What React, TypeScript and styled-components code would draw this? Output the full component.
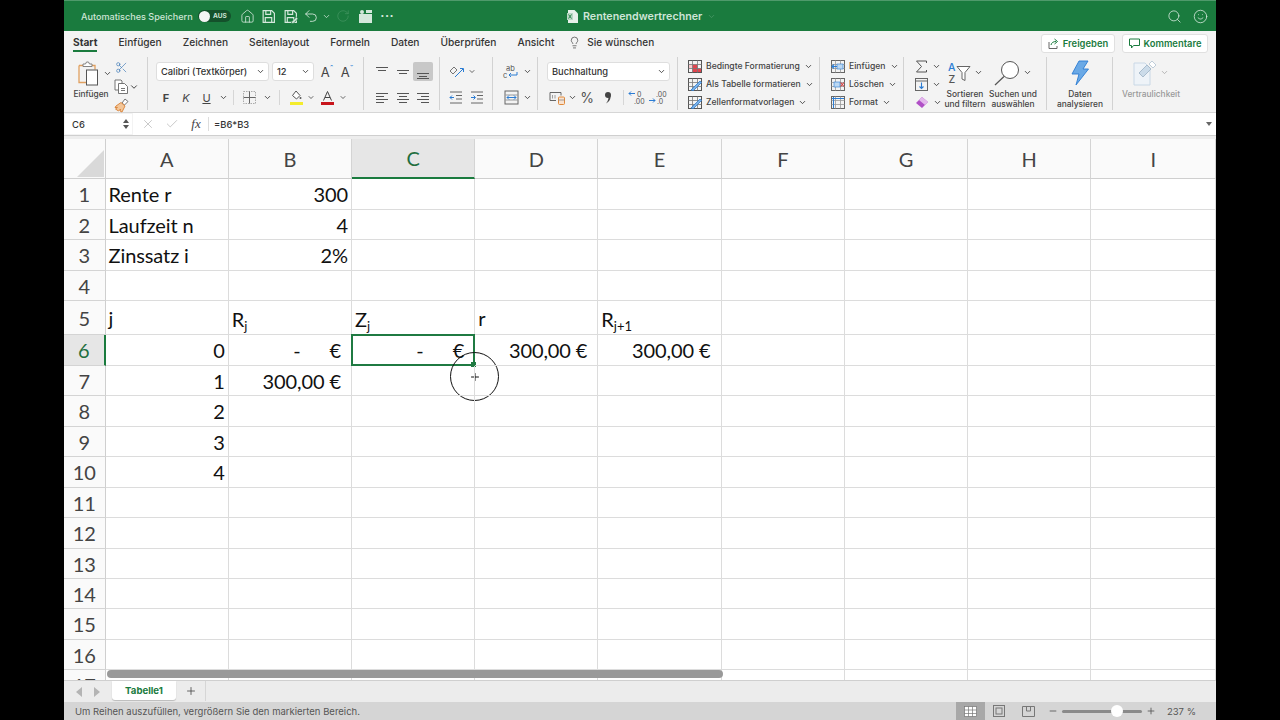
import React from 'react';
import styled, { createGlobalStyle } from 'styled-components';
import { Home, Search, Smile, Lightbulb, Scissors, ChevronDown, Undo2, RotateCw, Check, X, Plus, Minus } from 'lucide-react';

const GlobalStyle = createGlobalStyle`
  html, body { margin: 0; padding: 0; background: #000; height: 100%; overflow: hidden; }
  #root { height: 100%; }
  * { box-sizing: border-box; }
`;

const ui = `Inter, "Liberation Sans", sans-serif`;
const cellFont = `Lato, "Open Sans", sans-serif`;
const green = '#1a7b3e';

const Page = styled.div`
  display: flex;
  justify-content: center;
  height: 720px;
  background: #000;
`;
const Win = styled.div`
  width: 1152px;
  height: 720px;
  display: flex;
  flex-direction: column;
  background: #fff;
  font-family: ${ui};
  overflow: hidden;
`;

/* title bar */
const TitleBar = styled.header`
  height: 31px;
  flex: none;
  display: flex;
  align-items: center;
  position: relative;
  background: ${green};
  border-top: 1px solid #4f9a6b;
  padding-left: 17px;
  color: #fff;
`;
const AutoSave = styled.span`
  font-size: 9.1px;
  font-weight: 500;
  color: #cfe5d7;
  width: 117px;
  white-space: nowrap;
`;
const Toggle = styled.div`
  width: 33px;
  height: 12px;
  border-radius: 6px;
  background: #14512b;
  display: flex;
  align-items: center;
  gap: 3px;
  padding-left: 1px;
  font-size: 6.5px;
  font-weight: 700;
  color: #cfe5d7;
  margin-right: 5px;
`;
const Knob = styled.i`
  width: 11px;
  height: 11px;
  border-radius: 50%;
  background: #f4f4f4;
`;
const QuickSlot = styled.span<{ $w: number }>`
  width: ${p => p.$w}px;
  display: flex;
  justify-content: center;
  align-items: center;
  color: #d5e8dc;
`;
const DocTitle = styled.div`
  position: absolute;
  left: 503px;
  top: 0;
  height: 30px;
  display: flex;
  align-items: center;
  gap: 5px;
  font-size: 10.7px;
  font-weight: 600;
  color: #cfe5d7;
`;
const TitleRight = styled.div`
  margin-left: auto;
  display: flex;
  align-items: center;
  gap: 11px;
  padding-right: 8px;
  color: #d5e8dc;
`;

/* tabs */
const TabBar = styled.nav`
  height: 21px;
  flex: none;
  display: flex;
  align-items: stretch;
  background: #f3f3f3;
  padding-left: 9px;
  position: relative;
`;
const Tab = styled.span<{ $active?: boolean }>`
  font-size: 10.2px;
  font-weight: ${p => (p.$active ? 700 : 500)};
  color: #333;
  margin-right: 21px;
  padding-top: 2px;
  display: flex;
  align-items: center;
  white-space: nowrap;
  border-bottom: 2px solid ${p => (p.$active ? green : 'transparent')};
`;
const TellMe = styled.span`
  display: flex;
  align-items: center;
  gap: 6px;
  font-size: 10px;
  font-weight: 500;
  color: #333;
  margin-left: -7px;
  padding-top: 1px;
`;
const ShareButtons = styled.div`
  position: absolute;
  top: 3px;
  right: 8px;
  display: flex;
  gap: 7px;
`;
const ShareButton = styled.span<{ $w: number }>`
  width: ${p => p.$w}px;
  height: 19px;
  background: #fff;
  border: 1px solid #e0e0e0;
  border-radius: 3px;
  display: flex;
  align-items: center;
  justify-content: center;
  gap: 4px;
  font-size: 9.4px;
  font-weight: 600;
  color: ${green};
`;

/* ribbon */
const Ribbon = styled.section`
  height: 61px;
  flex: none;
  display: flex;
  background: #f3f3f3;
  border-bottom: 1px solid #d6d6d6;
`;
const Group = styled.div<{ $w: number; $pad?: number; $sep?: boolean }>`
  width: ${p => p.$w}px;
  flex: none;
  padding-left: ${p => p.$pad ?? 0}px;
  height: 53px;
  margin-top: 5px;
  display: flex;
  border-right: ${p => (p.$sep === false ? 'none' : '1px solid #d2d2d2')};
`;
const TwoRows = styled.div`
  display: flex;
  flex-direction: column;
  gap: 7px;
  padding-top: 5px;
`;
const Row = styled.div`
  display: flex;
  align-items: center;
  height: 19px;
`;
const Slot = styled.span<{ $w: number; $on?: boolean }>`
  width: ${p => p.$w}px;
  height: 19px;
  flex: none;
  display: flex;
  align-items: center;
  justify-content: center;
  border-radius: 2px;
  background: ${p => (p.$on ? '#c8c8c8' : 'transparent')};
  color: #444;
  font-size: 11px;
`;
const BigGlyph = styled.span`
  font-size: 14px;
  color: #555;
`;
const SizeGlyph = styled.span`
  font-size: 13px;
  color: #444;
  sup {
    font-size: 9px;
    line-height: 0;
    color: #2b7cd3;
  }
`;
const Combo = styled.div<{ $w: number }>`
  width: ${p => p.$w}px;
  height: 19px;
  flex: none;
  background: #fff;
  border: 1px solid #dedede;
  border-radius: 3px;
  display: flex;
  align-items: center;
  justify-content: space-between;
  padding: 0 3px 0 4px;
  font-size: 9.3px;
  font-weight: 500;
  color: #333;
  margin-right: 3px;
  white-space: nowrap;
`;
const VSep = styled.i`
  width: 1px;
  height: 15px;
  background: #d6d6d6;
  flex: none;
`;
const PasteCol = styled.div`
  width: 46px;
  margin-left: 4px;
  display: flex;
  flex-direction: column;
  align-items: center;
  font-size: 8.3px;
  font-weight: 500;
  color: #444;
`;
const PasteIcon = styled.div`
  height: 31px;
  display: flex;
  align-items: center;
  gap: 1px;
  margin-left: 8px;
  margin-top: 1px;
`;
const SmallCol = styled.div`
  display: flex;
  flex-direction: column;
  justify-content: space-between;
  padding: 1px 0 0;
  height: 53px;
`;
const ListCol = styled.div`
  display: flex;
  flex-direction: column;
  padding-top: 0;
`;
const ListItem = styled.div`
  height: 18px;
  flex: none;
  display: flex;
  align-items: center;
  gap: 4px;
  font-size: 8.6px;
  font-weight: 500;
  color: #444;
  white-space: nowrap;
`;
const BigTool = styled.div<{ $w: number; $muted?: boolean }>`
  width: ${p => p.$w}px;
  flex: none;
  display: flex;
  flex-direction: column;
  align-items: center;
  text-align: center;
  font-size: 8.4px;
  line-height: 9.6px;
  font-weight: 500;
  color: ${p => (p.$muted ? '#999' : '#444')};
  white-space: nowrap;
`;
const BigIcon = styled.div`
  height: 29px;
  margin-top: 1px;
  margin-bottom: 3px;
  display: flex;
  align-items: center;
  gap: 3px;
`;

/* formula bar */
const FormulaBar = styled.div`
  height: 22px;
  flex: none;
  display: flex;
  align-items: stretch;
  background: #f3f3f3;
`;
const NameBox = styled.div`
  width: 67px;
  margin: 1px 0 1px 1px;
  background: #fff;
  display: flex;
  align-items: center;
  justify-content: space-between;
  padding: 0 3px 0 7px;
  font-size: 9.4px;
  font-weight: 500;
  color: #333;
`;
const Spinner = styled.div`
  display: flex;
  flex-direction: column;
  gap: 2px;
`;
const FormulaInput = styled.div`
  flex: 1;
  margin-left: 1px;
  background: #fff;
  display: flex;
  align-items: center;
  position: relative;
  padding-left: 3px;
  font-size: 9.4px;
  color: #333;
`;
const FxSlot = styled.span<{ $w: number }>`
  width: ${p => p.$w}px;
  display: flex;
  justify-content: center;
  color: #bdbdbd;
`;
const Fx = styled.span`
  width: 24px;
  font: italic 13px "Liberation Serif", serif;
  color: #444;
  text-align: center;
`;
const FormulaText = styled.span`
  border-left: 1px solid #ddd;
  padding-left: 5px;
  margin-left: 0;
  height: 14px;
  display: flex;
  align-items: center;
  font-weight: 500;
`;
const FormulaCaret = styled.i`
  position: absolute;
  right: 4px;
  top: 9px;
  border: 3px solid transparent;
  border-top: 4px solid #666;
`;

/* sheet */
const SheetGap = styled.div`
  height: 4px;
  flex: none;
  background: #ededed;
  border-top: 1px solid #cfcfcf;
`;
const Sheet = styled.div`
  height: 541px;
  flex: none;
  position: relative;
  overflow: hidden;
  display: grid;
  grid-template-columns: 41.6px repeat(8, 123.2px) 1fr;
  grid-template-rows: 40px 31px 30px 31px 30px 34px 31px 30px 31px 30px 31px 30px 31px 30px 30px 31px 30px 31px;
  background: #fff;
`;
const Corner = styled.div`
  background: #fafafa;
  border-right: 1px solid #cfcfcf;
  border-bottom: 1px solid #cfcfcf;
  position: relative;
  &::after {
    content: '';
    position: absolute;
    right: 1px;
    bottom: 1px;
    border-style: solid;
    border-width: 0 0 27px 27px;
    border-color: transparent transparent #d9d9d9 transparent;
  }
`;
const ColHead = styled.div<{ $on?: boolean }>`
  background: ${p => (p.$on ? '#e6e6e6' : '#fafafa')};
  border-right: 1px solid #d4d4d4;
  border-bottom: ${p => (p.$on ? `2px solid ${green}` : '1px solid #cfcfcf')};
  display: flex;
  align-items: center;
  justify-content: center;
  font: 20px ${cellFont};
  letter-spacing: -0.4px;
  color: ${p => (p.$on ? '#1f6f3f' : '#444')};
`;
const RowHead = styled.div<{ $on?: boolean }>`
  background: ${p => (p.$on ? '#e6e6e6' : '#fafafa')};
  border-right: ${p => (p.$on ? `2px solid ${green}` : '1px solid #cfcfcf')};
  border-bottom: 1px solid #d4d4d4;
  display: flex;
  align-items: center;
  justify-content: center;
  font: 20px ${cellFont};
  letter-spacing: 0;
  color: ${p => (p.$on ? '#1f6f3f' : '#444')};
`;
const Cell = styled.div<{ $right?: number }>`
  position: relative;
  border-right: 1px solid #dcdcdc;
  border-bottom: 1px solid #dcdcdc;
  display: flex;
  align-items: center;
  justify-content: ${p => (p.$right != null ? 'flex-end' : 'flex-start')};
  padding: ${p => (p.$right != null ? `0 ${p.$right}px 0 0` : '0 0 0 3px')};
  font: 20px ${cellFont};
  letter-spacing: -0.1px;
  color: #111;
  white-space: nowrap;
`;
const SubCell = styled.span`
  margin-top: 3px;
  sub {
    font-size: 13px;
    line-height: 0;
    vertical-align: -4px;
    letter-spacing: 0;
  }
`;
const Dash = styled.span`
  margin-right: 29px;
`;
const Selection = styled.div`
  position: absolute;
  inset: -1px -1px -1px -1px;
  border: 2px solid #1f7a42;
  pointer-events: none;
`;
const Handle = styled.i`
  position: absolute;
  right: -3px;
  bottom: -3px;
  width: 5px;
  height: 5px;
  background: #1f7a42;
`;
const CursorRing = styled.div`
  position: absolute;
  right: -26px;
  bottom: -37px;
  width: 49px;
  height: 49px;
  border-radius: 50%;
  border: 1.3px solid #111;
  display: flex;
  align-items: center;
  justify-content: center;
  color: #111;
`;
const ScrollThumb = styled.div`
  position: absolute;
  left: 43px;
  bottom: 2px;
  width: 616px;
  height: 8px;
  border-radius: 4px;
  background: #999;
`;

/* bottom */
const SheetTabs = styled.div`
  height: 22px;
  flex: none;
  display: flex;
  align-items: flex-start;
  background: #ececec;
  border-top: 1px solid #cfcfcf;
  padding-left: 12px;
`;
const NavArrow = styled.i<{ $dir: 'l' | 'r' }>`
  margin-top: 6px;
  margin-right: 12px;
  border: 5px solid transparent;
  border-left: ${p => (p.$dir === 'r' ? '6px solid #b4b4b4' : 'none')};
  border-right: ${p => (p.$dir === 'l' ? '6px solid #b4b4b4' : 'none')};
`;
const SheetTab = styled.div`
  width: 64px;
  height: 19px;
  background: #fff;
  border-radius: 0 0 3px 3px;
  box-shadow: 0 1px 1px #bbb;
  display: flex;
  align-items: center;
  justify-content: center;
  font-size: 9.6px;
  font-weight: 700;
  color: ${green};
`;
const AddSheet = styled.div`
  width: 30px;
  height: 20px;
  border-right: 1px solid #d6d6d6;
  display: flex;
  align-items: center;
  justify-content: center;
  color: #444;
`;
const StatusBar = styled.footer`
  height: 18px;
  flex: none;
  display: flex;
  align-items: center;
  background: #d5d5d5;
  padding-left: 11px;
  font-size: 9.5px;
  color: #555;
`;
const StatusRight = styled.div`
  margin-left: auto;
  display: flex;
  align-items: center;
  height: 100%;
`;
const ViewButtons = styled.div`
  display: flex;
  height: 100%;
  margin-right: 5px;
`;
const ViewBtn = styled.span<{ $on?: boolean }>`
  width: 29px;
  height: 100%;
  display: flex;
  align-items: center;
  justify-content: center;
  background: ${p => (p.$on ? '#a8a8a8' : 'transparent')};
  color: #666;
`;
const ZoomTrack = styled.div`
  width: 80px;
  height: 3px;
  margin: 0 4px;
  background: #8a8a8a;
  border-radius: 2px;
  position: relative;
`;
const ZoomKnob = styled.i`
  position: absolute;
  left: 49px;
  top: -5px;
  width: 12px;
  height: 12px;
  border-radius: 50%;
  background: #fff;
`;
const ZoomValue = styled.span`
  margin: 0 20px 0 11px;
  white-space: nowrap;
`;

/* drawn icons */
const Chev = ({ size = 10, color = '#333' }: { size?: number; color?: string }) => (
  <ChevronDown size={size} color={color} strokeWidth={2.2} />
);

const Lines = ({ kind }: { kind: 'top' | 'mid' | 'bottom' | 'left' | 'center' | 'right' }) => {
  const rows: Record<string, [number, number, number][]> = {
    top: [[1, 2, 13], [3, 5, 11]],
    mid: [[1, 5, 13], [3, 8, 11]],
    bottom: [[1, 8, 13], [3, 11, 11]],
    left: [[1, 2, 13], [1, 5, 9], [1, 8, 13], [1, 11, 9]],
    center: [[1, 2, 13], [3, 5, 11], [1, 8, 13], [3, 11, 11]],
    right: [[1, 2, 13], [5, 5, 13], [1, 8, 13], [5, 11, 13]],
  };
  return (
    <svg width="14" height="14" viewBox="0 0 14 14" stroke="#555" strokeWidth="1">
      {rows[kind].map(([x, y, e]) => (
        <line key={`${x}-${y}`} x1={x} y1={y + 0.5} x2={e} y2={y + 0.5} />
      ))}
      {kind === 'bottom' && <line x1="1" y1="13.5" x2="13" y2="13.5" />}
    </svg>
  );
};

const SaveIcon = ({ pen }: { pen?: boolean }) => (
  <svg width="15" height="15" viewBox="0 0 14 14" fill="none" stroke="#d5e8dc" strokeWidth="1.1">
    <path d="M2 1.5h8l2.5 2.5v8.5H2z" />
    <path d="M4.5 1.5v3.5h4.500V1.500M4 12.500V8h6v4.500" />
    {pen && <path d="M8 12l4.500-4.500 1.500 1.500L9.500 13.500H8z" fill="#d5e8dc" stroke={green} strokeWidth="0.6" />}
  </svg>
);

const ClipIcon = () => (
  <svg width="24" height="25" viewBox="0 0 24 25" fill="none">
    <path d="M1 4.500h4M14 4.500h3v4" stroke="#e0a060" strokeWidth="1.300" />
    <path d="M1 4.500v17h7" stroke="#e0a060" strokeWidth="1.300" />
    <path d="M5 5V3h2.500l1-2h2l1 2H14v2.500H5z" fill="#fff" stroke="#777" strokeWidth="0.9" />
    <rect x="8.500" y="9" width="11" height="15" fill="#fff" stroke="#555" strokeWidth="1" />
  </svg>
);

const CopyIcon = () => (
  <svg width="15" height="15" viewBox="0 0 15 15" fill="#fff" stroke="#666" strokeWidth="0.9">
    <path d="M1 1h6l1 1v9H1z" />
    <path d="M4.500 4.500h6l3 3v7h-9z" />
    <path d="M7 9.500h4M7 11.500h4" />
  </svg>
);

const BrushIcon = () => (
  <svg width="15" height="15" viewBox="0 0 15 15" fill="none">
    <path d="M8 5l3-4 3 2.500-3.500 3.500z" fill="#fff" stroke="#666" strokeWidth="0.9" />
    <path d="M2 8l5-3.500 4 3.500-3 6-2-1 .5-2-2 2-3-2 2-1.500H1z" fill="#f3c699" stroke="#d98136" strokeWidth="0.9" />
  </svg>
);

const BorderIcon = () => (
  <svg width="15" height="15" viewBox="0 0 15 15" fill="none" stroke="#aaa" strokeWidth="1" strokeDasharray="1.500 1">
    <rect x="1.500" y="1.500" width="12" height="12" />
    <path d="M7.500 1.500v12M1.500 7.500h12" stroke="#666" strokeDasharray="none" />
  </svg>
);

const FillIcon = () => (
  <svg width="15" height="16" viewBox="0 0 15 16">
    <path d="M7 1l4 4.500L7.500 9 3.500 5.500z" fill="#fff" stroke="#555" strokeWidth="1" />
    <circle cx="11.500" cy="8" r="1" fill="#555" />
    <rect x="1" y="12" width="13" height="3" fill="#f4ec2c" />
  </svg>
);

const FontColorIcon = () => (
  <svg width="15" height="16" viewBox="0 0 15 16">
    <path d="M3.500 10.500l4-9 4 9M5 7.500h5" fill="none" stroke="#444" strokeWidth="1" />
    <rect x="1" y="12" width="13" height="3" fill="#c8151c" />
  </svg>
);

const OrientIcon = () => (
  <svg width="16" height="14" viewBox="0 0 16 14" fill="none">
    <path d="M1 6l4-4 3 3-4 4z" stroke="#666" strokeWidth="0.9" />
    <path d="M6 12l8-8M11 3.500h3.500V7" stroke="#2b7cd3" strokeWidth="1" />
  </svg>
);

const IndentIcon = ({ flip }: { flip?: boolean }) => (
  <svg width="14" height="13" viewBox="0 0 14 13" fill="none">
    <path d="M1 1h12M1 12h12" stroke="#666" />
    <path d="M7 4.500h6M7 8h6" stroke="#666" />
    {flip ? <path d="M1 6.500h4M3.500 4.500l2 2-2 2" stroke="#2b7cd3" /> : <path d="M1 6.500h4M3 4.500l-2 2 2 2" stroke="#2b7cd3" />}
  </svg>
);

const WrapIcon = () => (
  <svg width="18" height="16" viewBox="0 0 18 16" fill="none">
    <text x="4" y="6.500" fontSize="7.500" fill="#555" fontFamily="Inter, sans-serif">ab</text>
    <text x="1" y="13.500" fontSize="7.500" fill="#555" fontFamily="Inter, sans-serif">c</text>
    <path d="M15 8v3H7M9 9l-2 2 2 2" stroke="#2b7cd3" />
  </svg>
);

const MergeIcon = () => (
  <svg width="15" height="15" viewBox="0 0 15 15" fill="none">
    <rect x="1" y="1" width="13" height="13" stroke="#666" />
    <path d="M1 5h13M1 10h13" stroke="#999" />
    <path d="M3 7.500h9M5 5.500l-2 2 2 2M10 5.500l2 2-2 2" stroke="#2b7cd3" />
  </svg>
);

const AccountIcon = () => (
  <svg width="16" height="14" viewBox="0 0 16 14" fill="none">
    <path d="M1 1.500h11v3M1 1.500v8h6" stroke="#666" />
    <rect x="9.500" y="6" width="6" height="7.500" rx="1" fill="#f8e2cf" stroke="#e08a3c" />
    <path d="M9.500 9h6M3.500 4v3.500M6 4v3.500" stroke="#888" strokeWidth="0.8" />
  </svg>
);

const CommaIcon = () => (
  <svg width="8" height="13" viewBox="0 0 8 13">
    <circle cx="4" cy="4" r="3" fill="#444" />
    <path d="M6.500 4.500C7 8 5 11 2 12.500 4 10 4.500 8 4.500 6z" fill="#444" />
  </svg>
);

const DecimalIcon = ({ more }: { more?: boolean }) => (
  <svg width="20" height="15" viewBox="0 0 20 15" fill="none">
    <path d={more ? 'M1 10.500h6M5 8.500l2 2-2 2' : 'M1 3.500h6M3 1.500l-2 2 2 2'} stroke="#2b7cd3" />
    <text x={more ? 8 : 9} y="6.500" fontSize="7" fill="#555" fontFamily="Inter, sans-serif">{more ? '.00' : '0'}</text>
    <text x={more ? 9 : 6} y="13.500" fontSize="7" fill="#555" fontFamily="Inter, sans-serif">{more ? '.0' : '.00'}</text>
  </svg>
);

const StyleIcon = ({ kind }: { kind: 'cond' | 'table' | 'cell' }) => (
  <svg width="14" height="13" viewBox="0 0 14 13" fill="none">
    {kind === 'cond' && <path d="M4.500 4.500h5v8h-5zM9.500 8.500H13v4H9.500z" fill="#e0444e" />}
    {kind === 'cond' && <path d="M.5 4.500h3.500v4H.5z" fill="#f6c9cb" />}
    <rect x="0.500" y="0.500" width="13" height="12" stroke="#555" />
    <path d="M.5 4.500h13M.5 8.500h13M4.500.5v12M9.500.5v12" stroke="#777" strokeWidth="0.8" />
    {kind !== 'cond' && <path d="M3 12L12 3l1.500 1.500-8 8z" fill="#7fb3e6" stroke="#2b7cd3" strokeWidth="0.8" />}
  </svg>
);

const CellsIcon = ({ kind }: { kind: 'ins' | 'del' | 'fmt' }) => (
  <svg width="14" height="13" viewBox="0 0 14 13" fill="none">
    <rect x="0.500" y="0.500" width="13" height="12" stroke="#666" />
    <path d="M.5 4.500h13M.5 8.500h13M4.500.5v12M9.500.5v12" stroke="#999" strokeWidth="0.8" />
    {kind === 'ins' && <path d="M6 6.500H1M3 4.500l-2 2 2 2" stroke="#2b7cd3" strokeWidth="1.100" />}
    {kind === 'ins' && <rect x="6" y="4" width="6" height="5" fill="#bcd8f2" stroke="#2b7cd3" strokeWidth="0.6" />}
    {kind === 'del' && <rect x="3" y="4" width="6" height="5" fill="#bcd8f2" stroke="#2b7cd3" strokeWidth="0.6" />}
    {kind === 'del' && <path d="M9.500 4.500l3.500 4M13 4.500l-3.500 4" stroke="#d23b3b" strokeWidth="1.100" />}
    {kind === 'fmt' && <path d="M1 2.500h12M2.500 1v11" stroke="#2b7cd3" />}
  </svg>
);

const SigmaIcon = () => (
  <svg width="13" height="13" viewBox="0 0 13 13" fill="none" stroke="#555" strokeWidth="1">
    <path d="M11.500 3V1H1.500l5 5.500-5 5.500h10v-2" />
  </svg>
);
const FillDownIcon = () => (
  <svg width="13" height="13" viewBox="0 0 13 13" fill="none">
    <rect x="0.500" y="0.500" width="12" height="12" stroke="#666" />
    <path d="M.5 3h12" stroke="#666" />
    <path d="M6.500 4.500v6M4.500 8.500l2 2 2-2" stroke="#2b7cd3" strokeWidth="1.100" />
  </svg>
);
const EraserIcon = () => (
  <svg width="14" height="13" viewBox="0 0 14 13">
    <path d="M1 7l6-6 6 5-6 6z" fill="#b04fc6" />
    <path d="M7 1l6 5-3 3-6-5z" fill="#e3b7ec" />
  </svg>
);
const SortFilterIcon = () => (
  <svg width="24" height="26" viewBox="0 0 24 26" fill="none">
    <text x="1" y="11" fontSize="10.500" fill="#2b7cd3" fontFamily="Inter, sans-serif">A</text>
    <text x="1.500" y="23" fontSize="10.500" fill="#555" fontFamily="Inter, sans-serif">Z</text>
    <path d="M10 6.500h13l-5 6v8l-3-1.500v-6.500z" stroke="#666" fill="#fff" />
  </svg>
);
const LensIcon = () => (
  <svg width="26" height="26" viewBox="0 0 26 26" fill="none" stroke="#555">
    <circle cx="16" cy="10" r="8.500" fill="#fff" />
    <path d="M10 16.500L1 25" strokeWidth="1.200" />
  </svg>
);
const BoltIcon = () => (
  <svg width="18" height="26" viewBox="0 0 18 26">
    <path d="M8 1h9l-5 8h5.500L5 25l3-11H1z" fill="#6aa9e6" stroke="#2b7cd3" strokeWidth="0.9" />
  </svg>
);
const SensIcon = () => (
  <svg width="24" height="26" viewBox="0 0 24 26" fill="none">
    <path d="M1 3h11l5 5v17H1z" fill="#eef3f8" stroke="#c9d8e6" />
    <path d="M6 13l8-8 4 4-8 8z" fill="#cbdbe9" stroke="#a9bccd" />
    <path d="M16 4l3-3 4 4-3 3z" fill="#fff" stroke="#bfcdd9" />
  </svg>
);
const ExcelDoc = () => (
  <svg width="11" height="13" viewBox="0 0 11 13">
    <path d="M1 0h6.500L11 3.500V13H1z" fill="#e7f1ea" />
    <rect x="0" y="3" width="6" height="7" fill="#b9d7c4" />
    <path d="M1.500 4.500l3 4M4.500 4.500l-3 4" stroke="#1a7b3e" strokeWidth="0.9" />
  </svg>
);
const ShareIcon = () => (
  <svg width="11" height="11" viewBox="0 0 11 11" fill="none" stroke="#666">
    <path d="M1 4v6.500h8V8" />
    <path d="M3 7c.5-2.500 2.500-3.500 5-3.500M6.500 1l3 2.500-3 2.500" stroke="#1a7b3e" />
  </svg>
);
const CommentIcon = () => (
  <svg width="11" height="11" viewBox="0 0 11 11" fill="none" stroke="#1a7b3e">
    <path d="M.5 1h10v6.500H4.500l-2 2.500V7.500h-2z" />
  </svg>
);
const ClipboardGreen = () => (
  <svg width="15" height="14" viewBox="0 0 15 14" fill="#d5e8dc">
    <rect x="1" y="5" width="13" height="9" />
    <circle cx="4" cy="3" r="2" />
    <rect x="8" y="1" width="6" height="3" />
  </svg>
);
const GridView = () => (
  <svg width="13" height="11" viewBox="0 0 13 11" fill="#fff" stroke="#777" strokeWidth="0.7">
    <rect x=".5" y=".5" width="12" height="10" />
    <path d="M.5 4h12M.5 7.500h12M4.500.5v10M8.500.5v10" />
  </svg>
);
const PageView = () => (
  <svg width="12" height="12" viewBox="0 0 12 12" fill="none" stroke="#777">
    <rect x=".5" y=".5" width="11" height="11" />
    <rect x="3" y="3" width="6" height="6" />
  </svg>
);
const BreakView = () => (
  <svg width="13" height="11" viewBox="0 0 13 11" fill="none" stroke="#777">
    <path d="M.5 10.500V.5h12v10zM4.500.5v4.500h4V.5" />
  </svg>
);

/* sheet data */
type Value = { v: React.ReactNode; right?: number };
const ACC = 10;
const DASH: React.ReactNode = (
  <>
    <Dash>-</Dash>€
  </>
);
const rows: Record<number, Record<string, Value>> = {
  1: { A: { v: 'Rente r' }, B: { v: '300', right: 3 } },
  2: { A: { v: 'Laufzeit n' }, B: { v: '4', right: 3 } },
  3: { A: { v: 'Zinssatz i' }, B: { v: '2%', right: 3 } },
  5: {
    A: { v: 'j' },
    B: { v: <SubCell>R<sub>j</sub></SubCell> },
    C: { v: <SubCell>Z<sub>j</sub></SubCell> },
    D: { v: 'r' },
    E: { v: <SubCell>R<sub>j+1</sub></SubCell> },
  },
  6: {
    A: { v: '0', right: 3 },
    B: { v: DASH, right: ACC },
    C: { v: DASH, right: ACC },
    D: { v: '300,00 €', right: ACC },
    E: { v: '300,00 €', right: ACC },
  },
  7: { A: { v: '1', right: 3 }, B: { v: '300,00 €', right: ACC } },
  8: { A: { v: '2', right: 3 } },
  9: { A: { v: '3', right: 3 } },
  10: { A: { v: '4', right: 3 } },
};
const cols = ['A', 'B', 'C', 'D', 'E', 'F', 'G', 'H', 'I'];
const rowNums = Array.from({ length: 17 }, (_, i) => i + 1);
const tabs = ['Einfügen', 'Zeichnen', 'Seitenlayout', 'Formeln', 'Daten', 'Überprüfen', 'Ansicht'];

export default function App() {
  return (
    <Page>
      <GlobalStyle />
      <Win>
        <TitleBar>
          <AutoSave>Automatisches Speichern</AutoSave>
          <Toggle><Knob />AUS</Toggle>
          <QuickSlot $w={22}><Home size={15} strokeWidth={1.3} /></QuickSlot>
          <QuickSlot $w={21}><SaveIcon /></QuickSlot>
          <QuickSlot $w={22}><SaveIcon pen /></QuickSlot>
          <QuickSlot $w={20}><Undo2 size={16} strokeWidth={1.3} /></QuickSlot>
          <QuickSlot $w={10}><ChevronDown size={9} strokeWidth={2} /></QuickSlot>
          <QuickSlot $w={24}><RotateCw size={14} strokeWidth={1} color="#4c9a69" /></QuickSlot>
          <QuickSlot $w={20}><ClipboardGreen /></QuickSlot>
          <QuickSlot $w={24}>···</QuickSlot>
          <DocTitle>
            <ExcelDoc />
            Rentenendwertrechner
            <ChevronDown size={9} color="#4c9a69" />
          </DocTitle>
          <TitleRight>
            <Search size={15} strokeWidth={1.3} />
            <Smile size={15} strokeWidth={1.3} />
          </TitleRight>
        </TitleBar>

        <TabBar>
          <Tab $active>Start</Tab>
          {tabs.map(t => <Tab key={t}>{t}</Tab>)}
          <TellMe>
            <Lightbulb size={13} strokeWidth={1.2} />
            Sie wünschen
          </TellMe>
          <ShareButtons>
            <ShareButton $w={74}><ShareIcon />Freigeben</ShareButton>
            <ShareButton $w={86}><CommentIcon />Kommentare</ShareButton>
          </ShareButtons>
        </TabBar>

        <Ribbon>
          <Group $w={84} $pad={0}>
            <PasteCol>
              <PasteIcon><ClipIcon /><Chev size={9} /></PasteIcon>
              <span>Einfügen</span>
            </PasteCol>
            <SmallCol>
              <Slot $w={15}><Scissors size={13} strokeWidth={1.1} color="#2b6cb0" /></Slot>
              <Row><Slot $w={15}><CopyIcon /></Slot><Chev size={10} /></Row>
              <Slot $w={15}><BrushIcon /></Slot>
            </SmallCol>
          </Group>

          <Group $w={216} $pad={8}>
            <TwoRows>
              <Row>
                <Combo $w={113}>Calibri (Textkörper)<Chev size={9} /></Combo>
                <Combo $w={42}>12<Chev size={9} /></Combo>
                <Slot $w={20}><SizeGlyph>A<sup>ˆ</sup></SizeGlyph></Slot>
                <Slot $w={20}><SizeGlyph>A<sup>ˇ</sup></SizeGlyph></Slot>
              </Row>
              <Row>
                <Slot $w={20}><b>F</b></Slot>
                <Slot $w={20}><i>K</i></Slot>
                <Slot $w={21}><u>U</u></Slot>
                <Slot $w={12}><Chev size={9} /></Slot>
                <Slot $w={8}><VSep /></Slot>
                <Slot $w={24}><BorderIcon /></Slot>
                <Slot $w={12}><Chev size={9} /></Slot>
                <Slot $w={12}><VSep /></Slot>
                <Slot $w={22}><FillIcon /></Slot>
                <Slot $w={8}><Chev size={9} /></Slot>
                <Slot $w={24}><FontColorIcon /></Slot>
                <Slot $w={8}><Chev size={9} /></Slot>
              </Row>
            </TwoRows>
          </Group>

          <Group $w={76} $pad={8}>
            <TwoRows>
              <Row>
                <Slot $w={20}><Lines kind="top" /></Slot>
                <Slot $w={21}><Lines kind="mid" /></Slot>
                <Slot $w={20} $on><Lines kind="bottom" /></Slot>
              </Row>
              <Row>
                <Slot $w={20}><Lines kind="left" /></Slot>
                <Slot $w={21}><Lines kind="center" /></Slot>
                <Slot $w={20}><Lines kind="right" /></Slot>
              </Row>
            </TwoRows>
          </Group>

          <Group $w={53} $pad={6}>
            <TwoRows>
              <Row>
                <Slot $w={22}><OrientIcon /></Slot>
                <Slot $w={8}><Chev size={9} /></Slot>
              </Row>
              <Row>
                <Slot $w={20}><IndentIcon /></Slot>
                <Slot $w={21}><IndentIcon flip /></Slot>
              </Row>
            </TwoRows>
          </Group>

          <Group $w={45} $pad={8}>
            <TwoRows>
              <Row><Slot $w={20}><WrapIcon /></Slot><Slot $w={12}><Chev size={9} /></Slot></Row>
              <Row><Slot $w={20}><MergeIcon /></Slot><Slot $w={12}><Chev size={9} /></Slot></Row>
            </TwoRows>
          </Group>

          <Group $w={140} $pad={9}>
            <TwoRows>
              <Row><Combo $w={123}>Buchhaltung<Chev size={9} /></Combo></Row>
              <Row>
                <Slot $w={20}><AccountIcon /></Slot>
                <Slot $w={10}><Chev size={9} /></Slot>
                <Slot $w={20}><BigGlyph>%</BigGlyph></Slot>
                <Slot $w={22}><CommaIcon /></Slot>
                <Slot $w={8}><VSep /></Slot>
                <Slot $w={21}><DecimalIcon /></Slot>
                <Slot $w={20}><DecimalIcon more /></Slot>
              </Row>
            </TwoRows>
          </Group>

          <Group $w={142} $pad={10}>
            <ListCol>
              <ListItem><StyleIcon kind="cond" />Bedingte Formatierung<Chev size={9} /></ListItem>
              <ListItem><StyleIcon kind="table" />Als Tabelle formatieren<Chev size={9} /></ListItem>
              <ListItem><StyleIcon kind="cell" />Zellenformatvorlagen<Chev size={9} /></ListItem>
            </ListCol>
          </Group>

          <Group $w={84} $pad={11}>
            <ListCol>
              <ListItem><CellsIcon kind="ins" />Einfügen<Chev size={9} /></ListItem>
              <ListItem><CellsIcon kind="del" />Löschen<Chev size={9} /></ListItem>
              <ListItem><CellsIcon kind="fmt" />Format<Chev size={9} /></ListItem>
            </ListCol>
          </Group>

          <Group $w={143} $pad={11}>
            <ListCol>
              <ListItem><SigmaIcon /><Chev size={9} /></ListItem>
              <ListItem><FillDownIcon /><Chev size={9} /></ListItem>
              <ListItem><EraserIcon /><Chev size={9} /></ListItem>
            </ListCol>
            <BigTool $w={46}>
              <BigIcon><SortFilterIcon /><Chev size={9} /></BigIcon>
              Sortieren<br />und filtern
            </BigTool>
            <BigTool $w={50}>
              <BigIcon><LensIcon /><Chev size={9} /></BigIcon>
              Suchen und<br />auswählen
            </BigTool>
          </Group>

          <Group $w={66}>
            <BigTool $w={66}>
              <BigIcon><BoltIcon /></BigIcon>
              Daten<br />analysieren
            </BigTool>
          </Group>

          <Group $w={76} $sep={false}>
            <BigTool $w={76} $muted>
              <BigIcon><SensIcon /><Chev size={9} color="#aaa" /></BigIcon>
              Vertraulichkeit
            </BigTool>
          </Group>
        </Ribbon>

        <FormulaBar>
          <NameBox>
            C6
            <Spinner>
              <svg width="6" height="4" viewBox="0 0 6 4"><path d="M0 4l3-4 3 4z" fill="#555" /></svg>
              <svg width="6" height="4" viewBox="0 0 6 4"><path d="M0 0l3 4 3-4z" fill="#555" /></svg>
            </Spinner>
          </NameBox>
          <FormulaInput>
            <FxSlot $w={24}><X size={14} strokeWidth={1.4} /></FxSlot>
            <FxSlot $w={24}><Check size={14} strokeWidth={1.4} /></FxSlot>
            <Fx>fx</Fx>
            <FormulaText>=B6*B3</FormulaText>
            <FormulaCaret />
          </FormulaInput>
        </FormulaBar>

        <SheetGap />
        <Sheet>
          <Corner />
          {cols.map(c => <ColHead key={c} $on={c === 'C'}>{c}</ColHead>)}
          {rowNums.map(n => (
            <React.Fragment key={n}>
              <RowHead $on={n === 6}>{n}</RowHead>
              {cols.map(c => {
                const cell = rows[n]?.[c];
                return (
                  <Cell key={c} $right={cell?.right}>
                    {cell?.v}
                    {n === 6 && c === 'C' && (
                      <Selection>
                        <Handle />
                        <CursorRing><Plus size={12} strokeWidth={2} /></CursorRing>
                      </Selection>
                    )}
                  </Cell>
                );
              })}
            </React.Fragment>
          ))}
          <ScrollThumb />
        </Sheet>

        <SheetTabs>
          <NavArrow $dir="l" />
          <NavArrow $dir="r" />
          <SheetTab>Tabelle1</SheetTab>
          <AddSheet><Plus size={12} strokeWidth={1.6} /></AddSheet>
        </SheetTabs>

        <StatusBar>
          Um Reihen auszufüllen, vergrößern Sie den markierten Bereich.
          <StatusRight>
            <ViewButtons>
              <ViewBtn $on><GridView /></ViewBtn>
              <ViewBtn><PageView /></ViewBtn>
              <ViewBtn><BreakView /></ViewBtn>
            </ViewButtons>
            <Minus size={10} strokeWidth={2} color="#555" />
            <ZoomTrack><ZoomKnob /></ZoomTrack>
            <Plus size={10} strokeWidth={2} color="#555" />
            <ZoomValue>237 %</ZoomValue>
          </StatusRight>
        </StatusBar>
      </Win>
    </Page>
  );
}
